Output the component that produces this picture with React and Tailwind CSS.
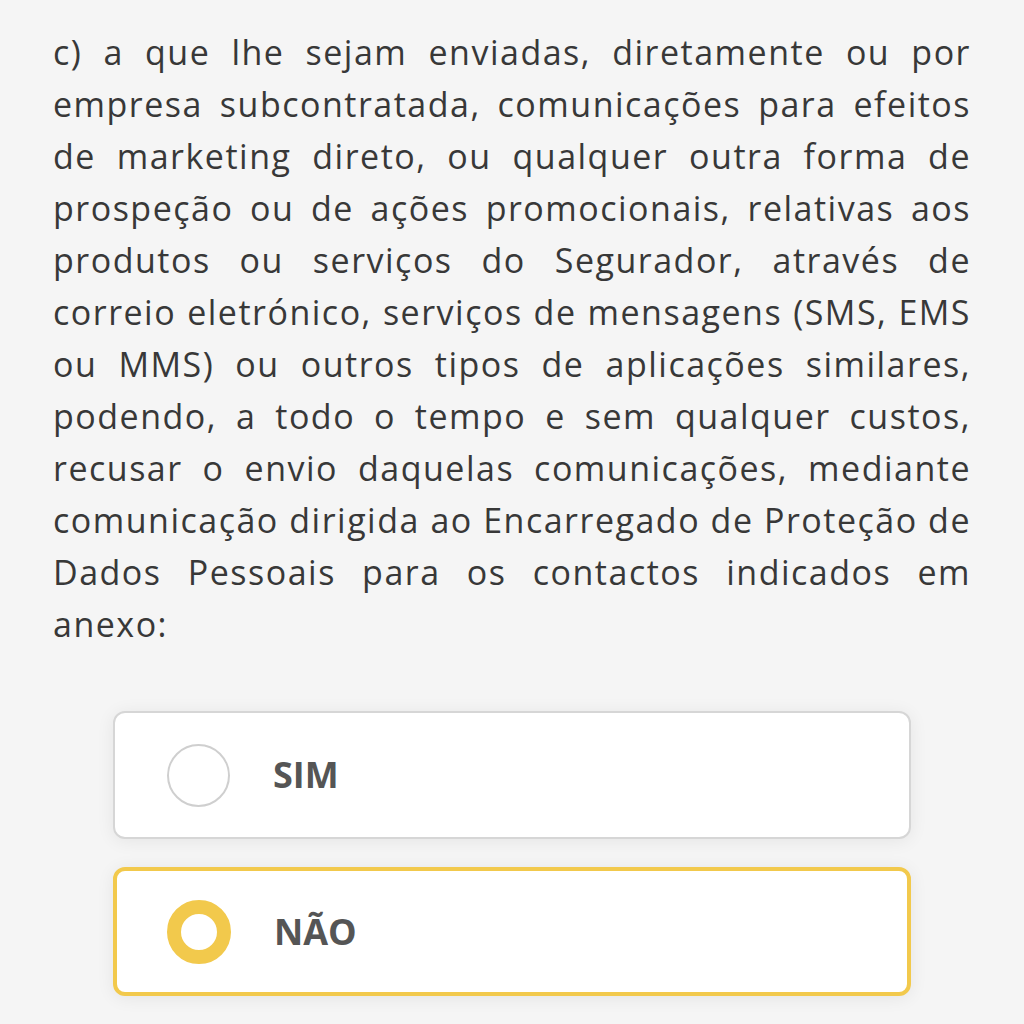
import React from 'react';

const lines = [
  'c) a que lhe sejam enviadas, diretamente ou por',
  'empresa subcontratada, comunicações para efeitos',
  'de marketing direto, ou qualquer outra forma de',
  'prospeção ou de ações promocionais, relativas aos',
  'produtos ou serviços do Segurador, através de',
  'correio eletrónico, serviços de mensagens (SMS, EMS',
  'ou MMS) ou outros tipos de aplicações similares,',
  'podendo, a todo o tempo e sem qualquer custos,',
  'recusar o envio daquelas comunicações, mediante',
  'comunicação dirigida ao Encarregado de Proteção de',
  'Dados Pessoais para os contactos indicados em',
];

const Option = ({ label, selected }) => (
  <div
    className={
      'rounded-[12px] bg-white flex items-center shadow-[0_2px_18px_rgba(0,0,0,0.07)] ' +
      (selected ? 'h-[129px] border-[4px] border-[#f2c94c] pl-[50px]' : 'h-[128px] border-2 border-[#d6d6d6] pl-[52px]')
    }
  >
    {selected ? (
      <span className="w-[64px] h-[64px] rounded-full border-[14px] border-[#f2c94c] bg-white shrink-0" />
    ) : (
      <span className="w-[63px] h-[63px] rounded-full border-2 border-[#cfcfcf] bg-white shrink-0" />
    )}
    <span className="ml-[43px] text-[36px] font-bold text-[#555555] leading-none">{label}</span>
  </div>
);

export default function App() {
  return (
    <div
      className="w-[1024px] h-[1024px] bg-[#f5f5f5] overflow-hidden"
      style={{ fontFamily: '"Open Sans", "Noto Sans", sans-serif' }}
    >
      <div className="pt-[26px] px-[53px] text-[34px] leading-[52px] tracking-[1.5px] text-[#383838]">
        {lines.map((l) => (
          <div key={l} className="text-justify [text-align-last:justify] whitespace-nowrap">
            {l}
          </div>
        ))}
        <div>anexo:</div>
      </div>
      <div className="mt-[61px] ml-[113px] w-[798px] flex flex-col gap-[28px]">
        <Option label="SIM" />
        <Option label="NÃO" selected />
      </div>
    </div>
  );
}
